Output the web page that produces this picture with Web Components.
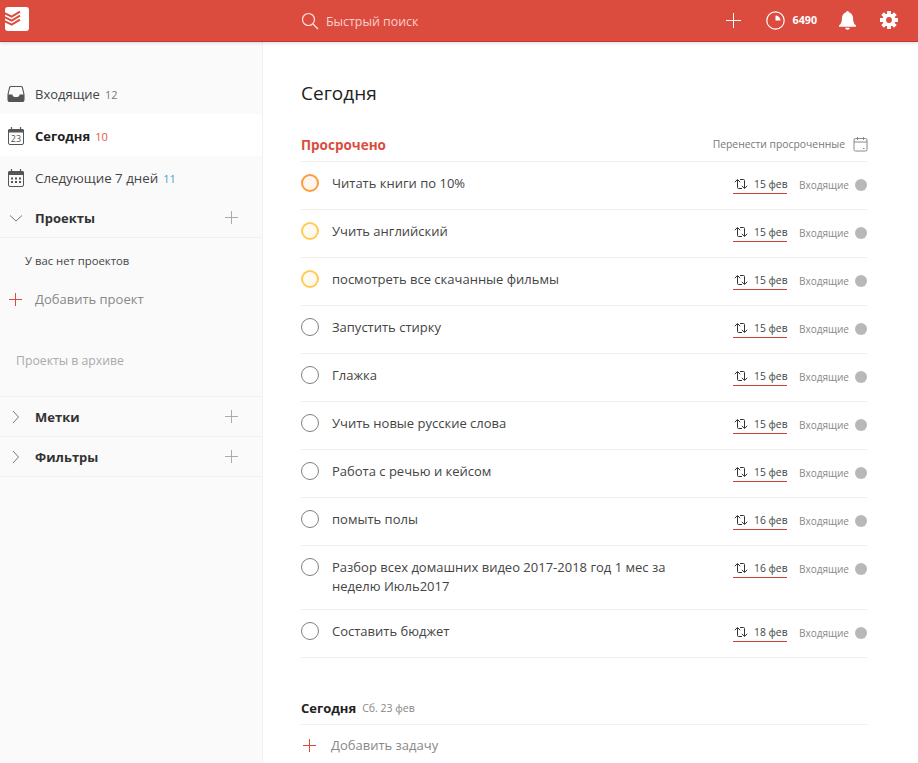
<!DOCTYPE html>
<html lang="ru">
<head>
<meta charset="utf-8">
<title>Сегодня</title>
<style>
  html, body { margin: 0; height: 100%; overflow: hidden; background: #fff; }
  body { font-family: "Open Sans", "Noto Sans", sans-serif; font-size: 13px; color: #333; }
</style>
</head>
<body>
<todo-app>
  <top-bar slot="top"></top-bar>
  <side-bar slot="side">
    <nav-item icon="inbox" count="12" tone="#777">Входящие</nav-item>
    <nav-item icon="today" count="10" tone="#e05a4e" active>Сегодня</nav-item>
    <nav-item icon="week" count="11" tone="#4a9ad4" style="font-size: 13.3px">Следующие 7 дней</nav-item>
    <nav-group open>Проекты</nav-group>
    <side-empty></side-empty>
    <nav-group border-top>Метки</nav-group>
    <nav-group>Фильтры</nav-group>
  </side-bar>
  <main-view slot="main">
    <section-head>Просрочено</section-head>
    <task-row ring="#ff9a3d" fill="#fff7ef" date="15 фев">Читать книги по 10%</task-row>
    <task-row ring="#ffcc55" fill="#fffbf0" date="15 фев">Учить английский</task-row>
    <task-row ring="#ffcc55" fill="#fffbf0" date="15 фев">посмотреть все скачанные фильмы</task-row>
    <task-row date="15 фев">Запустить стирку</task-row>
    <task-row date="15 фев">Глажка</task-row>
    <task-row date="15 фев">Учить новые русские слова</task-row>
    <task-row date="15 фев">Работа с речью и кейсом</task-row>
    <task-row date="16 фев">помыть полы</task-row>
    <task-row date="16 фев">Разбор всех домашних видео 2017-2018 год 1 мес за неделю Июль2017</task-row>
    <task-row date="18 фев">Составить бюджет</task-row>
    <today-foot></today-foot>
  </main-view>
</todo-app>

<script>
const plus = (color, size = 15) => `
<svg width="${size}" height="${size}" viewBox="0 0 ${size} ${size}" fill="none" stroke="${color}" stroke-width="1">
  <path d="M${size / 2} 1V${size - 1}M1 ${size / 2}H${size - 1}"/>
</svg>`;

const icons = {
  inbox: `<svg width="18" height="18" viewBox="0 0 18 18">
    <path d="M4 1.5h10a1.5 1.5 0 0 1 1.4 1L17 9.5v5A2 2 0 0 1 15 16.5H3a2 2 0 0 1-2-2v-5l1.600-7a1.500 1.500 0 0 1 1.400-1z" fill="none" stroke="#555" stroke-width="1.100"/>
    <path d="M1 9.500h4.500a3.500 2.600 0 0 0 7 0H17v5a2 2 0 0 1-2 2H3a2 2 0 0 1-2-2z" fill="#555"/>
  </svg>`,
  today: `<svg width="18" height="20" viewBox="0 0 18 20">
    <path d="M1 4.500a1.500 1.500 0 0 1 1.500-1.500h13A1.500 1.500 0 0 1 17 4.500V6.500H1z" fill="#555"/>
    <path d="M4.500 1v3M13.500 1v3" stroke="#555" stroke-width="1.200"/>
    <rect x="1.500" y="3.500" width="15" height="15" rx="1.500" fill="none" stroke="#555"/>
    <text x="9" y="16" text-anchor="middle" font-family="Open Sans, sans-serif" font-size="9" fill="#555">23</text>
  </svg>`,
  week: `<svg width="18" height="20" viewBox="0 0 18 20">
    <path d="M1 4.500a1.500 1.500 0 0 1 1.500-1.500h13A1.500 1.500 0 0 1 17 4.500V7H1z" fill="#555"/>
    <path d="M4.500 1v3M13.500 1v3" stroke="#555" stroke-width="1.200"/>
    <rect x="1.500" y="3.500" width="15" height="15" rx="1.500" fill="none" stroke="#555"/>
    <path d="M4 9.500h2v2H4zM8 9.500h2v2H8zM12 9.500h2v2h-2zM4 13h2v2H4zM8 13h2v2H8zM12 13h2v2h-2z" fill="#555"/>
  </svg>`
};

customElements.define(
  "todo-app",
  class extends HTMLElement {
    constructor() {
      super();
      const shadowRoot = this.attachShadow({ mode: "open" });
      shadowRoot.innerHTML = `
<style>
  :host { display: flex; flex-direction: column; height: 763px; overflow: hidden; }
  .body { display: flex; flex: 1; min-height: 0; }
</style>
<slot name="top"></slot>
<div class="body">
  <slot name="side"></slot>
  <slot name="main"></slot>
</div>
`;
    }
  }
);

customElements.define(
  "top-bar",
  class extends HTMLElement {
    constructor() {
      super();
      const shadowRoot = this.attachShadow({ mode: "open" });
      shadowRoot.innerHTML = `
<style>
  :host {
    display: flex; align-items: center; height: 41px; flex: none;
    background: #db4c3f; border-bottom: 1px solid #c53727;
    box-shadow: 0 1px 3px rgba(0,0,0,.15); position: relative; z-index: 2;
    color: #fff; box-sizing: content-box;
  }
  .logo { width: 24px; height: 24px; margin: 0 0 3px 5px; background: #fff; border-radius: 3px; overflow: hidden; flex: none; }
  .logo svg { display: block; }
  .search { display: flex; align-items: center; gap: 7px; margin-left: 272px; flex: 1; color: #fbd0cb; font-size: 12.4px; }
  .search svg { display: block; }
  .search span { padding-top: 2px; }
  .tools { display: flex; align-items: center; margin-bottom: 1px; }
  .add { margin-right: 24px; display: flex; }
  .karma { display: flex; align-items: center; gap: 8px; font-size: 10.7px; font-weight: 700; margin-right: 22px; }
  .bell { margin-right: 24px; display: flex; }
  .gear { margin-right: 20px; display: flex; }
</style>
<div class="logo">
  <svg width="24" height="24" viewBox="0 0 24 24" fill="none" stroke="#db4c3f" stroke-width="2">
    <path d="M-1 5.800L6.700 9.700 15 4.700"/>
    <path d="M-1 9.800L6.700 13.700 15 8.700"/>
    <path d="M-1 13.800L6.700 17.700 15 12.700"/>
  </svg>
</div>
<div class="search">
  <svg width="18" height="18" viewBox="0 0 18 18" fill="none" stroke="#fde4e1" stroke-width="1.200">
    <circle cx="7.500" cy="7.500" r="6"/><path d="M12 12l5 5"/>
  </svg>
  <span>Быстрый поиск</span>
</div>
<div class="tools">
  <span class="add">${plus("#fff", 17)}</span>
  <div class="karma">
    <svg width="19" height="19" viewBox="0 0 19 19">
      <circle cx="9.500" cy="9.500" r="8.700" fill="none" stroke="#fff" stroke-width="1.200"/>
      <path d="M9.500 4.500A5 5 0 0 1 14.500 9.500H9.500z" fill="#fff"/>
    </svg>
    <span>6490</span>
  </div>
  <span class="bell">
    <svg width="17" height="19" viewBox="0 0 17 19" fill="#fff">
      <path d="M8.500 0a1.400 1.400 0 0 1 1.300 1.300C12.500 2 14.100 4.500 14.100 7.400c0 3.500.8 5.100 2.900 7.200v1.100H0v-1.100c2.100-2.100 2.900-3.700 2.900-7.200 0-2.900 1.600-5.400 4.300-6.100A1.400 1.400 0 0 1 8.500 0z"/>
      <path d="M6.200 16.700h4.600a2.300 2.100 0 0 1-4.600 0z"/>
    </svg>
  </span>
  <span class="gear">
    <svg width="18" height="18" viewBox="0 0 18 18">
      <path d="M9 0v18M0 9h18M2.600 2.600l12.800 12.800M15.400 2.600L2.600 15.400" stroke="#fff" stroke-width="3.800" fill="none"/>
      <circle cx="9" cy="9" r="6.400" fill="#fff"/>
      <circle cx="9" cy="9" r="2.900" fill="#db4c3f"/>
    </svg>
  </span>
</div>
`;
    }
  }
);

customElements.define(
  "side-bar",
  class extends HTMLElement {
    constructor() {
      super();
      const shadowRoot = this.attachShadow({ mode: "open" });
      shadowRoot.innerHTML = `
<style>
  :host {
    display: block; width: 263px; flex: none; box-sizing: border-box;
    background: #fafafa; border-right: 1px solid #f1f1f1; padding-top: 30px;
  }
</style>
<slot></slot>
`;
    }
  }
);

customElements.define(
  "nav-item",
  class extends HTMLElement {
    constructor() {
      super();
      const shadowRoot = this.attachShadow({ mode: "open" });
      const tone = this.getAttribute("tone");
      const active = this.hasAttribute("active");
      shadowRoot.innerHTML = `
<style>
  :host {
    display: flex; align-items: center; box-sizing: border-box; height: 42px;
    padding: 2px 0 0 7px; color: #444; background: ${active ? "#fff" : "transparent"};
  }
  .icon { width: 18px; display: flex; margin-right: 10px; }
  .name { font-weight: ${active ? 700 : 400}; color: ${active ? "#222" : "#444"}; }
  .count { margin-left: 5px; font-size: 11px; color: ${tone}; }
</style>
<span class="icon">${icons[this.getAttribute("icon")]}</span>
<span class="name"><slot></slot></span>
<span class="count">${this.getAttribute("count")}</span>
`;
    }
  }
);

customElements.define(
  "nav-group",
  class extends HTMLElement {
    constructor() {
      super();
      const shadowRoot = this.attachShadow({ mode: "open" });
      const open = this.hasAttribute("open");
      shadowRoot.innerHTML = `
<style>
  :host {
    display: flex; align-items: center; height: 39px; box-sizing: content-box;
    border-bottom: 1px solid #f0f0f0; padding: 0 23px 0 0; font-weight: 700; color: #333;
  }
  :host([border-top]) { border-top: 1px solid #f0f0f0; height: 39px; }
  .arrow { width: 35px; display: flex; justify-content: flex-start; padding-left: 9px; box-sizing: border-box; flex: none; }
  .name { flex: 1; }
  .add { display: flex; }
</style>
<span class="arrow">
  <svg width="14" height="14" viewBox="0 0 14 14" fill="none" stroke="#777" stroke-width="1">
    <path d="${open ? "M1 4.500l6 5.500 6-5.500" : "M4 1l5.500 6L4 13"}"/>
  </svg>
</span>
<span class="name"><slot></slot></span>
<span class="add">${plus("#aaa")}</span>
`;
    }
  }
);

customElements.define(
  "side-empty",
  class extends HTMLElement {
    constructor() {
      super();
      const shadowRoot = this.attachShadow({ mode: "open" });
      shadowRoot.innerHTML = `
<style>
  :host { display: block; height: 158px; }
  .none { padding: 15px 0 0 25px; font-size: 11.3px; line-height: 16px; color: #444; }
  .add { display: flex; align-items: center; margin-top: 20px; height: 20px; padding-left: 8px; color: #888; }
  .add svg { display: block; margin-right: 12px; }
  .archive { margin: 42px 0 0 16px; font-size: 12.25px; line-height: 20px; color: #aaa; }
</style>
<div class="none">У вас нет проектов</div>
<div class="add">${plus("#db4c3f")}<span>Добавить проект</span></div>
<div class="archive">Проекты в архиве</div>
`;
    }
  }
);

customElements.define(
  "main-view",
  class extends HTMLElement {
    constructor() {
      super();
      const shadowRoot = this.attachShadow({ mode: "open" });
      shadowRoot.innerHTML = `
<style>
  :host { display: block; flex: 1; min-width: 0; box-sizing: border-box; padding: 36px 51px 0 38px; }
  h1 { margin: 0 0 23px; font-size: 19px; font-weight: 400; line-height: 30px; color: #222; }
</style>
<h1>Сегодня</h1>
<slot></slot>
`;
    }
  }
);

customElements.define(
  "section-head",
  class extends HTMLElement {
    constructor() {
      super();
      const shadowRoot = this.attachShadow({ mode: "open" });
      shadowRoot.innerHTML = `
<style>
  :host {
    display: flex; align-items: center; justify-content: space-between;
    height: 28px; padding-bottom: 2px; border-bottom: 1px solid #f0f0f0;
  }
  .name { font-weight: 700; color: #db4c3f; font-size: 13.5px; }
  .move { display: flex; align-items: center; gap: 8px; margin-bottom: 2px; font-size: 10.35px; color: #777; }
  .move svg { display: block; margin-right: -1px; }
</style>
<span class="name"><slot></slot></span>
<span class="move">
  <span>Перенести просроченные</span>
  <svg width="15" height="16" viewBox="0 0 15 16" fill="none" stroke="#888" stroke-width="1">
    <rect x="1" y="2.500" width="13" height="12.500" rx="1.500"/>
    <path d="M1 6h13M4.500 1v3M10.500 1v3"/>
    <path d="M10 12.500h1.500"/>
  </svg>
</span>
`;
    }
  }
);

customElements.define(
  "task-row",
  class extends HTMLElement {
    constructor() {
      super();
      const shadowRoot = this.attachShadow({ mode: "open" });
      const ring = this.getAttribute("ring") || "#808080";
      const fill = this.getAttribute("fill") || "#fff";
      shadowRoot.innerHTML = `
<style>
  :host {
    display: flex; align-items: flex-start; box-sizing: border-box;
    min-height: 48px; padding: 12px 0; border-bottom: 1px solid #f0f0f0;
  }
  .check { width: 18px; height: 18px; border-radius: 50%; border: 1px solid ${ring}; background: ${fill}; flex: none; box-sizing: border-box; margin-right: 13px; }
  :host([ring]) .check { border-width: 2px; }
  .text { flex: 1; min-width: 0; line-height: 19px; padding: 0 45px 1px 0; color: #444; }
  .date { display: flex; align-items: center; gap: 6px; height: 20px; width: 54px; box-sizing: border-box; padding: 1px 0 0 1px; font-size: 10.3px; color: #444; flex: none; border-bottom: 1px solid #c7422f; white-space: nowrap; }
  .date svg { display: block; flex: none; }
  .proj { display: flex; align-items: center; gap: 6px; margin: 2px 0 0 12px; font-size: 10px; color: #888; flex: none; height: 18px; white-space: nowrap; }
  .dot { width: 12px; height: 12px; border-radius: 50%; background: #b8b8b8; }
</style>
<span class="check"></span>
<span class="text"><slot></slot></span>
<span class="date">
  <svg width="14" height="12" viewBox="0 0 14 12" fill="none" stroke="#333" stroke-width="1">
    <path d="M.8 4.200L3.500 1.500 6.200 4.200M3.500 2v7.500a1 1 0 0 0 1 1H8"/>
    <path d="M13.200 7.800L10.500 10.500 7.800 7.800M10.500 10V2.500a1 1 0 0 0-1-1H6"/>
  </svg>
  <span>${this.getAttribute("date")}</span>
</span>
<span class="proj"><span>Входящие</span><span class="dot"></span></span>
`;
    }
  }
);

customElements.define(
  "today-foot",
  class extends HTMLElement {
    constructor() {
      super();
      const shadowRoot = this.attachShadow({ mode: "open" });
      shadowRoot.innerHTML = `
<style>
  :host { display: block; padding-top: 34px; }
  .head { display: flex; align-items: center; gap: 6px; height: 32px; border-bottom: 1px solid #f0f0f0; }
  b { color: #222; font-size: 13px; }
  small { font-size: 10.5px; color: #888; }
  .add { display: flex; align-items: center; height: 40px; padding-left: 1px; color: #888; }
  .add svg { display: block; margin-right: 14px; }
</style>
<div class="head"><b>Сегодня</b><small>Сб. 23 фев</small></div>
<div class="add">${plus("#db4c3f")}<span>Добавить задачу</span></div>
`;
    }
  }
);
</script>
</body>
</html>
